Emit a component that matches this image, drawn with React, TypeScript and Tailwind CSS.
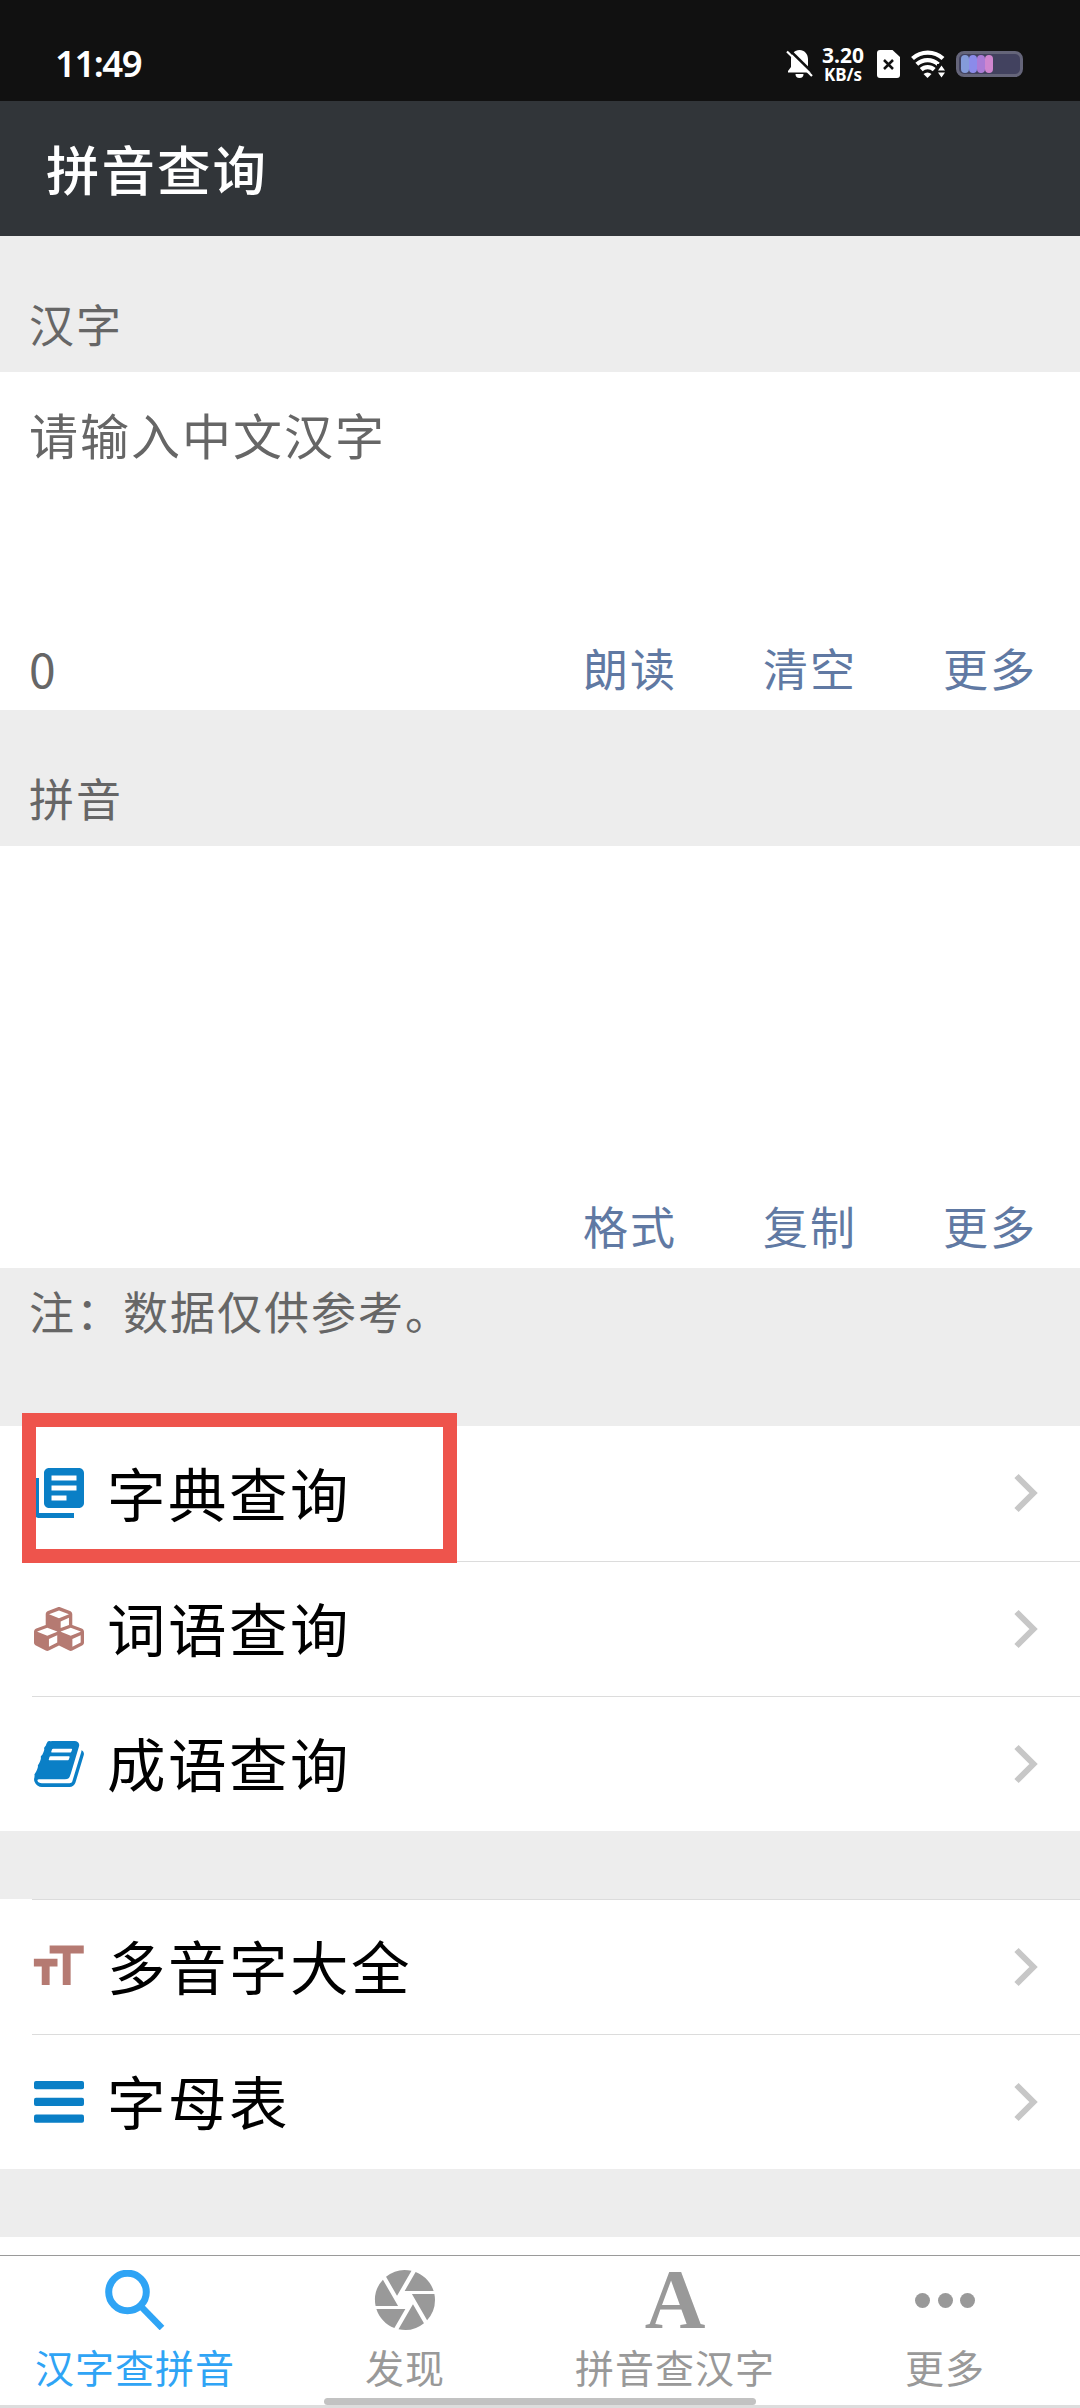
import React from 'react';
import { FaCubes } from 'react-icons/fa';
import { MdCamera, MdFormatSize, MdLibraryBooks } from 'react-icons/md';

const StatusBar: React.FC = () => (
  <div className="flex h-[101px] items-start justify-between bg-[#111111] pl-[55px] pr-[57px] text-white">
    <span className="pt-[38px] font-['Noto_Sans'] text-[36.500px] font-semibold leading-[50px] tracking-[-1.500px]">11:49</span>
    <div className="flex items-center pt-[44px]">
      <svg className="h-9 w-[27px]" viewBox="0 0 27 36" fill="none">
        <path d="M13.500 4C18.500 4 22 8 22 13v8l3 4v1.500H2V25l3-4v-8c0-5 3.500-9 8.500-9z" fill="#fff" />
        <path d="M9.500 28h8a4 4 0 0 1-8 0z" fill="#fff" />
        <path d="M3 3.500l24.500 24" stroke="#111" strokeWidth="2.500" />
        <path d="M1 5.500l25 24.500" stroke="#fff" strokeWidth="2.200" />
      </svg>
      <div className="ml-[8px] flex w-[44px] flex-col items-center font-['Noto_Sans'] font-bold">
        <span className="text-[21px] leading-[22px]">3.20</span>
        <span className="text-[17px] leading-[17px]">KB/s</span>
      </div>
      <svg className="ml-[12px] h-7 w-[23px]" viewBox="0 0 23 28">
        <path d="M3 0h12.500L23 7v18a3 3 0 0 1-3 3H3a3 3 0 0 1-3-3V3a3 3 0 0 1 3-3z" fill="#fff" />
        <path d="M7 10l9 9M16 10l-9 9" stroke="#111" strokeWidth="2.500" />
      </svg>
      <svg className="ml-[11px] h-7 w-[34px]" viewBox="0 0 34 28" fill="none">
        <path d="M1.500 8.500a22.500 22.500 0 0 1 30.500 0M5.800 14.200a16 16 0 0 1 21.500 0M10.200 19.600a9.500 9.500 0 0 1 13 0" stroke="#fff" strokeWidth="4.200" />
        <path d="M12.500 24a6 6 0 0 1 8 0l-4 4z" fill="#fff" />
        <path d="M26 14h8v14h-8z" fill="#111" />
        <path d="M27 20.500l3.500-5 3.500 5zM27 22.500h7l-3.500 5z" fill="#fff" />
      </svg>
      <div className="ml-[11px] flex h-[26px] w-[67px] rounded-[8px] border-[3px] border-[#65657a] bg-[#42425f] px-[2px] py-px">
        <span className="w-[8px] rounded-[4px] bg-[#849bd9]" />
        <span className="w-[8px] rounded-[4px] bg-[#8b8bea]" />
        <span className="w-[8px] rounded-[4px] bg-[#aa7bd6]" />
        <span className="w-[8px] rounded-[4px] bg-[#cf86cf]" />
      </div>
    </div>
  </div>
);

const SectionLabel: React.FC<{ text: string }> = ({ text }) => (
  <div className="h-[136px] pl-[29px] pt-[58px] text-[45px] leading-[60px] tracking-[2px] text-[#666666]">{text}</div>
);

const Actions: React.FC<{ items: string[] }> = ({ items }) => (
  <div className="flex">
    {items.map((item) => (
      <button key={item} className="w-[180px] text-center text-[45px] leading-[60px] tracking-[2px] text-[#6079a3]">
        {item}
      </button>
    ))}
  </div>
);

const Chevron: React.FC = () => (
  <svg className="h-10 w-6" viewBox="0 0 24 40" fill="none">
    <path d="M2.500 3L19.500 20L2.500 37" stroke="#c7c7c7" strokeWidth="6" />
  </svg>
);

const BookIcon: React.FC = () => (
  <svg className="w-[50px] h-[46px]" viewBox="0 128 1664 1536" fill="currentColor">
    <path d="M1639 478q40 57 18 129l-275 906q-19 64-76.500 107.500t-122.500 43.500h-923q-77 0-148.500-53.500t-99.500-131.500q-24-67-2-127 0-4 3-27t4-37q1-8-3-21.500t-3-19.500q2-11 8-21t16.500-23.500 16.500-23.500q23-38 45-91.500t30-91.500q3-10 .5-30t-.5-28q3-11 17-28t17-23q21-36 42-92t25-90q1-9-2.500-32t.5-28q4-13 22-30.500t22-22.500q19-26 42.500-84.500t27.500-96.500q1-8-3-25.500t-2-26.500q2-8 9-18t18-23 17-21q8-12 16.500-30.500t15-35 16-36 19.500-32 26.500-23.500 36-11.500 47.500 5.500l-1 3q38-9 51-9h761q74 0 114 56t18 130l-274 906q-36 119-71.500 153.500t-128.500 34.500h-869q-27 0-38 15-11 16-1 43 24 70 144 70h923q29 0 56-15.500t35-41.500l300-987q7-22 5-57 38 15 59 43zm-1064 2q-4 13 2 22.500t20 9.500h608q13 0 25.500-9.500t16.500-22.500l21-64q4-13-2-22.500t-20-9.500h-608q-13 0-25.500 9.500t-16.500 22.500zm-83 256q-4 13 2 22.500t20 9.500h608q13 0 25.500-9.500t16.500-22.500l21-64q4-13-2-22.500t-20-9.500h-608q-13 0-25.500 9.500t-16.500 22.500z" />
  </svg>
);

const BarsIcon: React.FC = () => (
  <svg className="h-[42px] w-[50px]" viewBox="0 0 50 42" fill="currentColor">
    <rect width="50" height="8.300" rx="2" />
    <rect y="16.700" width="50" height="8.300" rx="2" />
    <rect y="33.400" width="50" height="8.300" rx="2" />
  </svg>
);

interface RowProps {
  icon: React.ReactNode;
  text: string;
  border?: string;
}

const Row: React.FC<RowProps> = ({ icon, text, border = '' }) => (
  <div className="bg-white pl-8">
    <div className={`flex h-[135px] items-center pb-px pr-[42px] ${border}`}>
      <div className="ml-[2px] flex w-[50px] shrink-0 justify-center">{icon}</div>
      <span className="-mt-[3px] ml-[23px] flex-1 text-[58.500px] leading-[80px] tracking-[2.500px] text-black">{text}</span>
      <Chevron />
    </div>
  </div>
);

const Tab: React.FC<{ icon: React.ReactNode; text: string; color: string }> = ({ icon, text, color }) => (
  <div className={`flex flex-1 flex-col items-center ${color}`}>
    <div className="mt-[14px] flex h-[60px] items-center">{icon}</div>
    <span className="mt-[11px] text-[39px] leading-[50px] tracking-[1px]">{text}</span>
  </div>
);

const App: React.FC = () => {
  return (
    <div className="flex h-[2408px] w-[1080px] flex-col overflow-hidden bg-[#ededed] font-['Noto_Sans_CJK_SC',sans-serif]">
      <StatusBar />
      <header className="h-[135px] bg-[#313539] pl-[46px] pt-[27px] text-[53.500px] font-medium leading-[80px] tracking-[2px] text-white">
        拼音查询
      </header>

      <SectionLabel text="汉字" />
      <section className="flex h-[338px] flex-col justify-between bg-white pb-[12px] pt-[32px]">
        <p className="pl-[29px] text-[49px] leading-[60px] tracking-[2px] text-[#666666]">请输入中文汉字</p>
        <div className="flex items-center justify-between">
          <span className="-mt-[2px] pl-[29px] text-[48px] leading-[60px] text-[#666666]">0</span>
          <Actions items={['朗读', '清空', '更多']} />
        </div>
      </section>

      <SectionLabel text="拼音" />
      <section className="flex h-[422px] items-end justify-end bg-white pb-[12px]">
        <Actions items={['格式', '复制', '更多']} />
      </section>
      <p className="h-[158px] pl-[29px] pt-[13px] text-[45px] leading-[60px] tracking-[2px] text-[#666666]">注：数据仅供参考。</p>

      <div className="relative">
        <Row icon={<MdLibraryBooks className="size-[60px] shrink-0 text-[#0a7fc6]" />} text="字典查询" />
        <Row icon={<FaCubes className="size-[50px] text-[#b57a72]" />} text="词语查询" border="border-t-1 border-[#dcdcdc]" />
        <Row icon={<span className="text-[#0a7fc6]"><BookIcon /></span>} text="成语查询" border="border-t-1 border-[#dcdcdc]" />
        <div className="absolute -top-[13px] left-[22px] h-[150px] w-[435px] border-[14px] border-[#ee544c]" />
      </div>

      <div className="mt-[68px]">
        <Row icon={<MdFormatSize className="mr-[3px] size-[63px] shrink-0 text-[#b57a72]" />} text="多音字大全" border="border-t-1 border-[#dcdcdc]" />
        <Row icon={<span className="text-[#0a7fc6]"><BarsIcon /></span>} text="字母表" border="border-t-1 border-[#dcdcdc]" />
      </div>

      <div className="mt-[68px] h-[18px] bg-white" />
      <nav className="relative flex h-[153px] border-b-[3px] border-t border-b-[#dddddd] border-t-[#9a9a9a] bg-white">
        <Tab
          color="text-[#2fa4f5]"
          text="汉字查拼音"
          icon={
            <svg className="size-[60px]" viewBox="0 0 60 60" fill="none" stroke="currentColor">
              <circle cx="22.500" cy="22" r="18.800" strokeWidth="7" />
              <path d="M37 37.500L57 58" strokeWidth="6.500" />
            </svg>
          }
        />
        <Tab color="text-[#999999]" text="发现" icon={<MdCamera className="size-[72px] shrink-0" />} />
        <Tab
          color="text-[#999999]"
          text="拼音查汉字"
          icon={<span className="font-['Liberation_Serif',serif] text-[84px] font-bold leading-[60px]">A</span>}
        />
        <Tab
          color="text-[#999999]"
          text="更多"
          icon={
            <div className="flex gap-[7.500px]">
              <span className="size-[15px] rounded-full bg-current" />
              <span className="size-[15px] rounded-full bg-current" />
              <span className="size-[15px] rounded-full bg-current" />
            </div>
          }
        />
        <div className="absolute bottom-0 left-[324px] h-[7px] w-[432px] rounded-full bg-[#c2c2c2]" />
      </nav>
    </div>
  );
};

export default App;
